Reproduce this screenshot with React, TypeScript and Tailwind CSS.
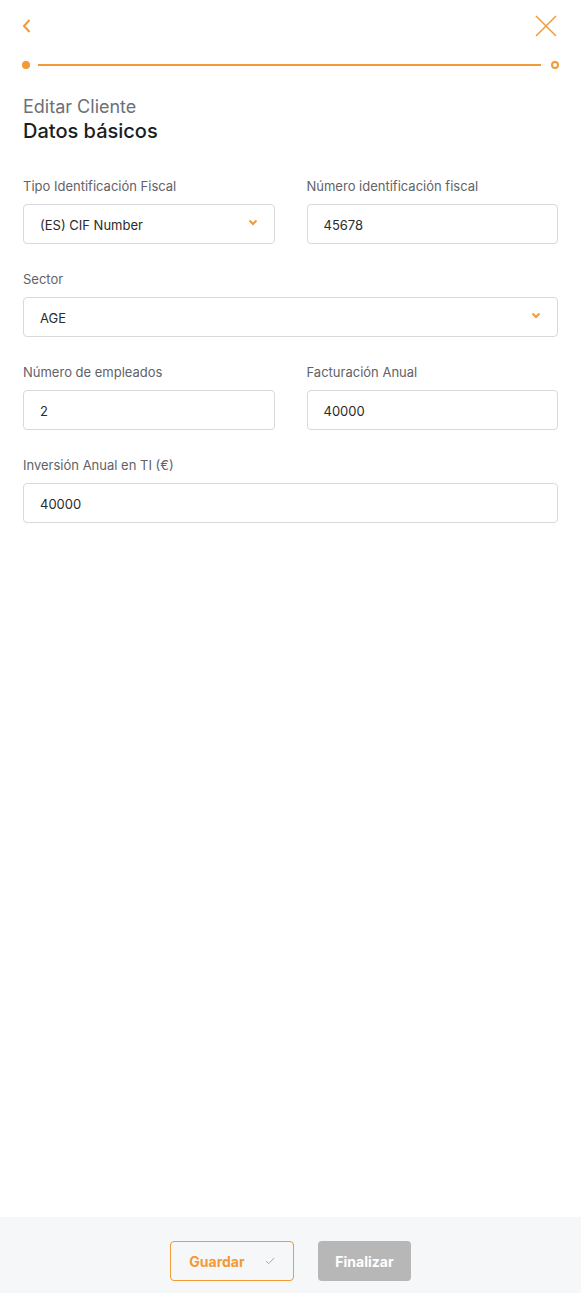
import React from "react";

const ORANGE = "#f29a33";

const Field = ({
  label,
  value,
  select,
}: {
  label: string;
  value: string;
  select?: boolean;
}) => (
  <div className="flex flex-col">
    <label className="text-[13px] leading-[20px] text-[#5f6368] mb-2">{label}</label>
    <div className="h-10 border border-[#d7d9dc] rounded-[4px] flex items-center justify-between pl-4 pr-4 pt-1 bg-white">
      <span className="text-[13px] text-[#2b2b2b]">{value}</span>
      {select && (
        <svg width="10" height="7" viewBox="0 0 10 7" fill="none" className="-mt-2">
          <path d="M1.5 1.5L5 5L8.5 1.5" stroke={ORANGE} strokeWidth="2" />
        </svg>
      )}
    </div>
  </div>
);

const App = () => {
  return (
    <div className="min-h-screen flex flex-col bg-white font-['Inter','Liberation_Sans',Arial,sans-serif]">
      <div className="flex-1 px-[23px]">
        {/* top bar */}
        <div className="flex items-center justify-between h-[50px] pt-[1px]">
          <svg width="10" height="16" viewBox="0 0 10 16" fill="none" className="ml-[-1px]">
            <path d="M7.5 2L2 8L7.5 14" stroke={ORANGE} strokeWidth="2" />
          </svg>
          <svg width="22" height="22" viewBox="0 0 22 22" fill="none" className="mr-[1px]">
            <path d="M1 1L21 21M21 1L1 21" stroke={ORANGE} strokeWidth="1.5" />
          </svg>
        </div>

        {/* progress */}
        <div className="flex items-center h-[30px] -mx-[1px]">
          <span className="w-2 h-2 rounded-full bg-[#f29a33] shrink-0" />
          <span className="flex-1 h-[2px] bg-[#f29a33] ml-2 mr-[10px]" />
          <span className="w-2 h-2 rounded-full border-2 border-[#f29a33] shrink-0" />
        </div>

        {/* title */}
        <div className="mt-[15px]">
          <h1 className="text-[18px] leading-[24px] text-[#6b7079]">Editar Cliente</h1>
          <h2 className="text-[20px] leading-[25px] text-[#1c1d20] font-medium">Datos básicos</h2>
        </div>

        {/* form */}
        <div className="mt-[32px] grid grid-cols-2 gap-x-8 gap-y-[25px]">
          <Field label="Tipo Identificación Fiscal" value="(ES) CIF Number" select />
          <Field label="Número identificación fiscal" value="45678" />
          <div className="col-span-2">
            <Field label="Sector" value="AGE" select />
          </div>
          <Field label="Número de empleados" value="2" />
          <Field label="Facturación Anual" value="40000" />
          <div className="col-span-2">
            <Field label="Inversión Anual en TI (€)" value="40000" />
          </div>
        </div>
      </div>

      {/* footer */}
      <div className="h-[76px] bg-[#f6f7f9] flex items-start pt-6 justify-center gap-6">
        <button className="h-10 w-[124px] border border-[#f29a33] rounded-[4px] flex items-center justify-center gap-5 text-[#f29a33] font-bold text-[14px] bg-transparent">
          Guardar
          <svg width="10" height="8" viewBox="0 0 10 8" fill="none">
            <path d="M1 4L3.7 6.7L9 1" stroke={ORANGE} strokeWidth="1" />
          </svg>
        </button>
        <button className="h-10 w-[93px] rounded-[4px] bg-[#b7b7b7] text-white font-bold text-[14px]">
          Finalizar
        </button>
      </div>
    </div>
  );
};

export default App;
